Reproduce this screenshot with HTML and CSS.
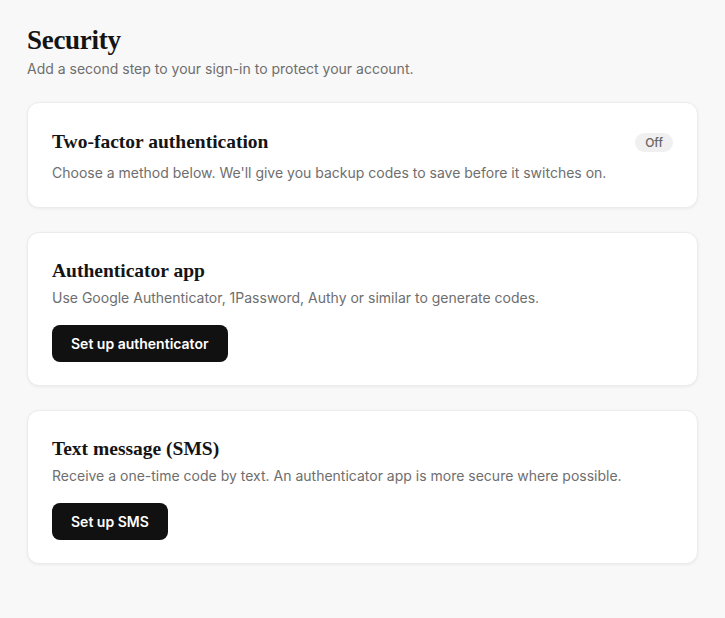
FILE: index.html
```html
<!DOCTYPE html>
<html lang="en">

<head>
    <meta charset="UTF-8" />
    <meta name="viewport" content="width=device-width, initial-scale=1.0" />
    <title>Security</title>
    <link rel="stylesheet" href="styles.css">
</head>

<body>
    <main class="security-page">
        <header class="page-header">
            <h1>Security</h1>
            <p>Add a second step to your sign-in to protect your account.</p>
        </header>

        <section class="card card--status">
            <div class="card-head">
                <h2>Two-factor authentication</h2>
                <span class="badge">Off</span>
            </div>
            <p>Choose a method below. We'll give you backup codes to save before it switches on.</p>
        </section>

        <section class="card">
            <h2>Authenticator app</h2>
            <p>Use Google Authenticator, 1Password, Authy or similar to generate codes.</p>
            <button class="btn" type="button">Set up authenticator</button>
        </section>

        <section class="card">
            <h2>Text message (SMS)</h2>
            <p>Receive a one-time code by text. An authenticator app is more secure where possible.</p>
            <button class="btn" type="button">Set up SMS</button>
        </section>
    </main>
</body>

</html>
```

FILE: styles.css
```css
* {
    margin: 0;
    padding: 0;
    box-sizing: border-box;
}

body {
    background: #f8f8f8;
    color: #141414;
    font-family: 'Inter', 'Liberation Sans', sans-serif;
    padding: 24px 27px;
}

.security-page {
    display: flex;
    flex-direction: column;
    gap: 24px;
}

.page-header {
    margin-bottom: 1px;
}

.page-header h1,
.card h2 {
    font-family: 'Liberation Serif', 'DejaVu Serif', serif;
    font-weight: 700;
    color: #141414;
}

.page-header h1 {
    font-size: 27px;
    line-height: 32px;
    letter-spacing: -0.3px;
}

.page-header p {
    font-size: 14px;
    line-height: 22px;
    color: #6e6e6e;
    margin-top: 2px;
    margin-bottom: -3px;
}

.card {
    background: #ffffff;
    border: 1px solid #ececec;
    border-radius: 12px;
    box-shadow: 0 1px 3px rgba(0, 0, 0, 0.06);
    padding: 25px 24px 23px;
    display: flex;
    flex-direction: column;
    align-items: flex-start;
}

.card h2 {
    font-size: 19.5px;
    line-height: 26px;
}

.card p {
    font-size: 14px;
    line-height: 22px;
    color: #6e6e6e;
    margin-top: 3px;
}

.card-head {
    width: 100%;
    display: flex;
    justify-content: space-between;
    align-items: center;
    margin-top: 1px;
    margin-bottom: 4px;
}

.badge {
    background: #f0f0f0;
    color: #666;
    font-size: 12px;
    font-weight: 500;
    line-height: 19px;
    padding: 0 10px;
    border-radius: 10px;
}

.btn {
    margin-top: 16px;
    height: 37px;
    padding: 0 19px;
    border: none;
    border-radius: 8px;
    background: #111111;
    color: #ffffff;
    font-family: 'Inter', 'Liberation Sans', sans-serif;
    font-size: 14px;
    font-weight: 600;
    cursor: pointer;
}
```
